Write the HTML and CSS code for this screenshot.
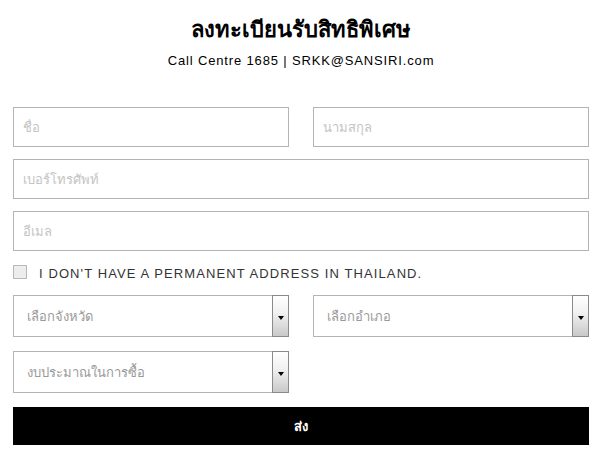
FILE: index.html
```html
<!DOCTYPE html>
<html lang="th">
<head>
<meta charset="utf-8">
<title>ลงทะเบียนรับสิทธิพิเศษ</title>
<link rel="stylesheet" href="styles.css">
</head>
<body>
<div class="page">
  <h1 class="title">ลงทะเบียนรับสิทธิพิเศษ</h1>
  <p class="subtitle">Call Centre 1685 | SRKK@SANSIRI.com</p>
  <form class="form">
    <div class="row two">
      <input class="field" type="text" placeholder="ชื่อ">
      <input class="field" type="text" placeholder="นามสกุล">
    </div>
    <div class="row">
      <input class="field" type="text" placeholder="เบอร์โทรศัพท์">
    </div>
    <div class="row">
      <input class="field" type="text" placeholder="อีเมล">
    </div>
    <label class="check">
      <span class="box"></span>
      <span class="check-label">I DON'T HAVE A PERMANENT ADDRESS IN THAILAND.</span>
    </label>
    <div class="row two selects">
      <div class="select"><span class="select-text">เลือกจังหวัด</span><span class="arrow"><span class="tri"></span></span></div>
      <div class="select"><span class="select-text">เลือกอำเภอ</span><span class="arrow"><span class="tri"></span></span></div>
    </div>
    <div class="row two selects">
      <div class="select"><span class="select-text">งบประมาณในการซื้อ</span><span class="arrow"><span class="tri"></span></span></div>
    </div>
    <button class="submit" type="button">ส่ง</button>
  </form>
</div>
</body>
</html>
```
FILE: styles.css
```css
html, body {
  margin: 0;
  padding: 0;
  background: #fff;
}
body {
  font-family: "Liberation Sans", "DejaVu Sans", sans-serif;
  color: #000;
}
.page {
  padding: 15px 11px 0 13px;
}
.title {
  margin: 0;
  font-family: "Liberation Serif", "DejaVu Serif", serif;
  font-size: 22px;
  line-height: 30px;
  font-weight: bold;
  text-align: center;
}
.subtitle {
  margin: 6px 0 0;
  font-size: 13px;
  line-height: 20px;
  letter-spacing: 0.85px;
  text-align: center;
}
.form {
  margin-top: 36px;
  display: flex;
  flex-direction: column;
}
.row {
  display: grid;
  grid-template-columns: 1fr;
  margin-bottom: 12px;
}
.row.two {
  grid-template-columns: 276px 276px;
  column-gap: 24px;
}
.field {
  box-sizing: border-box;
  height: 40px;
  border: 1px solid #b4b4b4;
  border-radius: 0;
  padding: 0 9px;
  font-family: "Liberation Sans", "DejaVu Sans", sans-serif;
  font-size: 13px;
  color: #333;
  outline: none;
  margin: 0;
}
.field::placeholder {
  color: #c4c4c4;
}
.check {
  display: flex;
  align-items: center;
  height: 16px;
  margin: 1px 0 15px;
}
.box {
  box-sizing: border-box;
  width: 14px;
  height: 14px;
  border: 1px solid #b8b8b8;
  background: #ededed;
  flex: none;
}
.check-label {
  margin-left: 12px;
  padding-top: 3px;
  font-size: 13px;
  letter-spacing: 1.1px;
  color: #333;
}
.selects {
  margin-bottom: 14px;
}
.select {
  box-sizing: border-box;
  height: 42px;
  border: 1px solid #b4b4b4;
  display: flex;
  align-items: center;
  justify-content: space-between;
}
.select-text {
  padding-left: 13px;
  font-size: 13px;
  color: #9a9a9a;
}
.arrow {
  box-sizing: border-box;
  align-self: stretch;
  width: 17px;
  margin: -1px -1px -1px 0;
  border: 1px solid #8a8a8a;
  background: linear-gradient(#ffffff, #f2f2f2 40%, #c9c9c9);
  display: flex;
  align-items: center;
  justify-content: center;
}
.tri {
  width: 0;
  height: 0;
  border-left: 3px solid transparent;
  border-right: 3px solid transparent;
  border-top: 4px solid #000;
  margin-top: 4px;
}
.submit {
  height: 38px;
  margin: 0;
  border: 0;
  background: #000;
  color: #fff;
  font-family: "Liberation Sans", "DejaVu Sans", sans-serif;
  font-size: 13px;
  font-weight: bold;
  cursor: pointer;
}
```
